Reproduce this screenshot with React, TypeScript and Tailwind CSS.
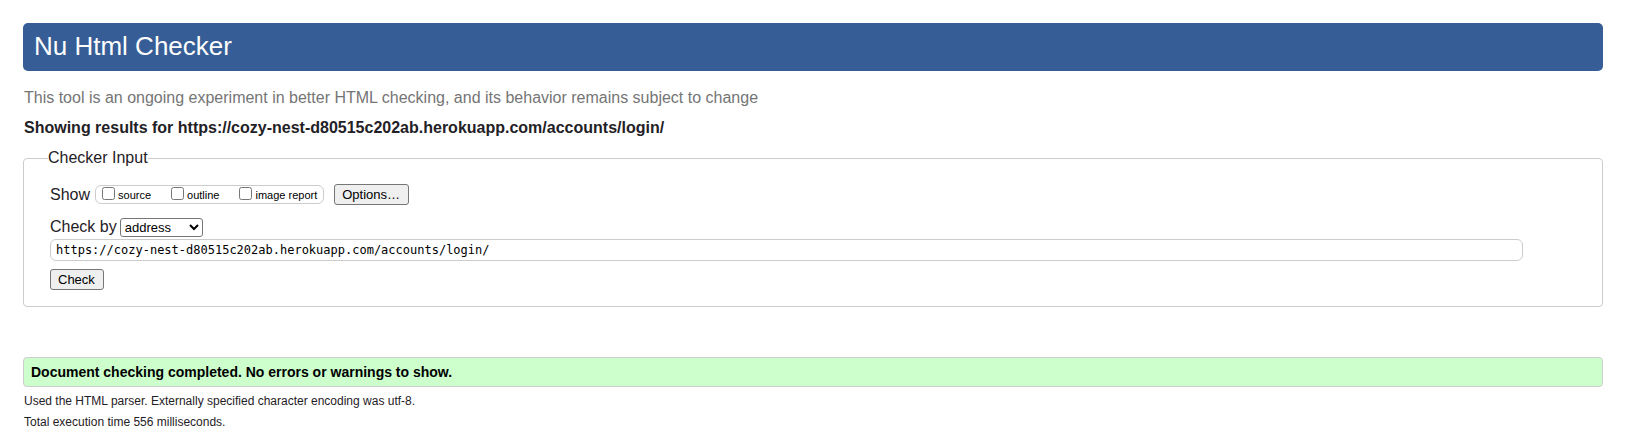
import { useState } from "react";

const reports = [
  { id: "show-source", label: "source" },
  { id: "show-outline", label: "outline" },
  { id: "show-image-report", label: "image report" },
];

const buttonStyle =
  "h-[21px] rounded-[3px] border border-[#767676] bg-[#efefef] pr-2 pl-[7px] text-[13px] leading-[19px] text-black";

export default function App() {
  const [address, setAddress] = useState(
    "https://cozy-nest-d80515c202ab.herokuapp.com/accounts/login/",
  );

  return (
    <div className="bg-white pt-[23px] pr-7 pb-2 pl-[23px] font-['Liberation_Sans',Arial,sans-serif] text-base leading-5 text-[#1f2126]">
      <header className="flex h-12 items-center rounded-[5px] bg-[#365d95] px-[11px] pb-[2px]">
        <h1 className="text-[26px] leading-[30px] text-[#fdfdfd]">Nu Html Checker</h1>
      </header>

      <main>
        <p className="mt-[17px] px-px text-[#757575]">
          This tool is an ongoing experiment in better HTML checking, and its behavior remains
          subject to change
        </p>
        <h2 className="mt-[10px] px-px font-bold">
          Showing results for https://cozy-nest-d80515c202ab.herokuapp.com/accounts/login/
        </h2>

        <form onSubmit={(event) => event.preventDefault()}>
          <fieldset className="mt-[10px] rounded border border-[#cccccc] pr-[79px] pb-4 pl-[26px]">
            <legend className="-ml-[2px]">Checker Input</legend>

            <div className="mt-4 flex items-center">
              <span>Show</span>
              <div className="ml-[5px] flex h-[19px] items-center gap-5 rounded-md border border-[#cccccc] px-[6px]">
                {reports.map((report) => (
                  <div key={report.id} className="flex items-center gap-[3px]">
                    <input id={report.id} type="checkbox" className="mb-[3px] size-[13px]" />
                    <label htmlFor={report.id} className="text-[11px] leading-4 text-black">
                      {report.label}
                    </label>
                  </div>
                ))}
              </div>
              <button type="button" className={`${buttonStyle} ml-[10px]`}>
                Options…
              </button>
            </div>

            <div className="mt-3 flex items-center gap-[3px]">
              <label htmlFor="check-by">Check by</label>
              <select
                id="check-by"
                defaultValue="address"
                className="h-[19px] w-[83px] rounded-[3px] border border-[#767676] bg-white text-[13px] text-black"
              >
                <option value="address">address</option>
                <option value="file">file upload</option>
                <option value="text">text input</option>
              </select>
            </div>

            <input
              type="url"
              aria-label="Address"
              value={address}
              onChange={(event) => setAddress(event.target.value)}
              className="mt-[2px] block h-[22px] w-full rounded-md border border-[#cccccc] px-[5px] font-['DejaVu_Sans_Mono',monospace] text-[12px] text-black"
            />

            <button type="submit" className={`${buttonStyle} mt-2 block`}>
              Check
            </button>
          </fieldset>
        </form>

        <p className="mt-[50px] rounded border border-[#cccccc] bg-[#ccffcc] px-[7px] py-1 text-sm font-bold text-black">
          Document checking completed. No errors or warnings to show.
        </p>
        <p className="mt-1 px-px text-xs leading-[21px]">
          Used the HTML parser. Externally specified character encoding was utf-8.
        </p>
        <p className="px-px text-xs leading-[21px]">Total execution time 556 milliseconds.</p>
      </main>
    </div>
  );
}
